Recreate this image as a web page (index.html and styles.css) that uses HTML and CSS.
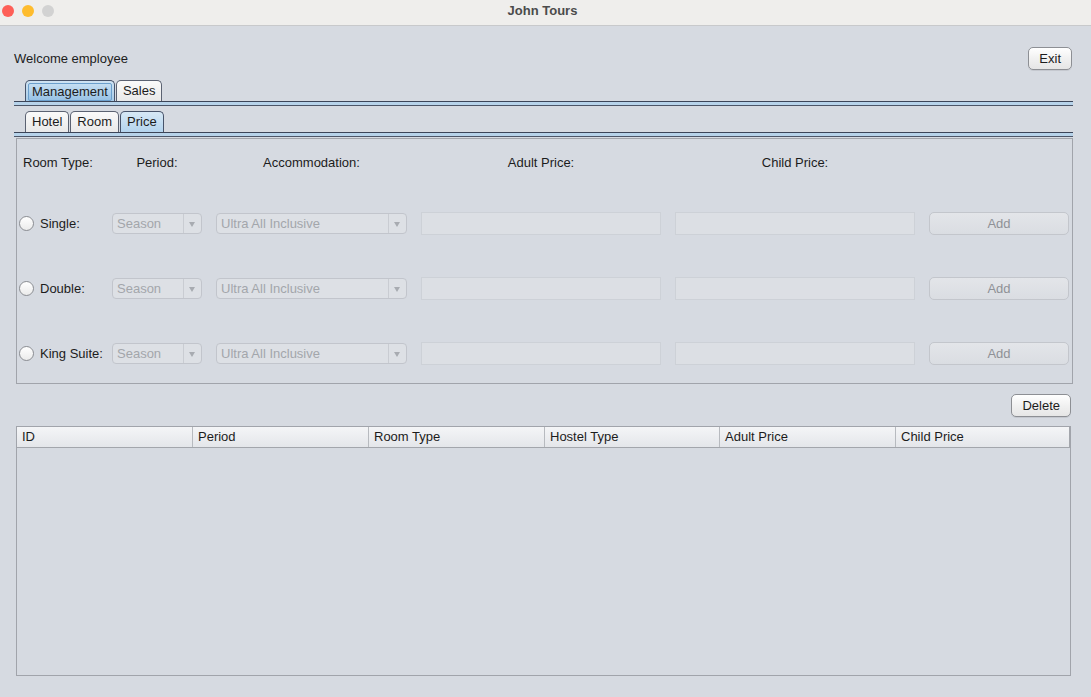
FILE: index.html
```html
<!DOCTYPE html>
<html>
<head>
<meta charset="utf-8">
<title>John Tours</title>
<link rel="stylesheet" href="styles.css">
</head>
<body>
<div class="titlebar">
  <div class="lights">
    <span class="light red"></span>
    <span class="light yellow"></span>
    <span class="light gray"></span>
  </div>
  <div class="title">John Tours</div>
</div>
<div class="window">
  <div class="top-row">
    <span class="welcome">Welcome employee</span>
    <button class="btn">Exit</button>
  </div>
  <div class="tabs main-tabs">
    <div class="tab selected"><span>Management</span></div>
    <div class="tab"><span>Sales</span></div>
  </div>
  <div class="tabline"></div>
  <div class="tabs sub-tabs">
    <div class="tab"><span>Hotel</span></div>
    <div class="tab"><span>Room</span></div>
    <div class="tab selected-soft"><span>Price</span></div>
  </div>
  <div class="tabline"></div>

  <div class="panel">
    <div class="hdr first">Room Type:</div>
    <div class="hdr">Period:</div>
    <div class="hdr">Accommodation:</div>
    <div class="hdr">Adult Price:</div>
    <div class="hdr">Child Price:</div>
    <div class="hdr"></div>

    <label class="radio-label"><span class="radio"></span>Single:</label>
    <div class="combo"><span class="val">Season</span><span class="arrow"></span></div>
    <div class="combo"><span class="val">Ultra All Inclusive</span><span class="arrow"></span></div>
    <div class="field"></div>
    <div class="field"></div>
    <button class="btn add">Add</button>

    <label class="radio-label"><span class="radio"></span>Double:</label>
    <div class="combo"><span class="val">Season</span><span class="arrow"></span></div>
    <div class="combo"><span class="val">Ultra All Inclusive</span><span class="arrow"></span></div>
    <div class="field"></div>
    <div class="field"></div>
    <button class="btn add">Add</button>

    <label class="radio-label"><span class="radio"></span>King Suite:</label>
    <div class="combo"><span class="val">Season</span><span class="arrow"></span></div>
    <div class="combo"><span class="val">Ultra All Inclusive</span><span class="arrow"></span></div>
    <div class="field"></div>
    <div class="field"></div>
    <button class="btn add">Add</button>
  </div>

  <div class="delete-row">
    <button class="btn">Delete</button>
  </div>

  <div class="table">
    <div class="thead">
      <div class="th">ID</div>
      <div class="th">Period</div>
      <div class="th">Room Type</div>
      <div class="th">Hostel Type</div>
      <div class="th">Adult Price</div>
      <div class="th">Child Price</div>
    </div>
    <div class="tbody"></div>
  </div>
</div>
</body>
</html>
```

FILE: styles.css
```css
* { box-sizing: border-box; }
html, body {
  margin: 0;
  padding: 0;
}
body {
  width: 1091px;
  height: 697px;
  overflow: hidden;
  background: #d6dae1;
  font-family: "Liberation Sans", Arial, sans-serif;
  font-size: 13px;
  color: #1c1c1c;
  display: flex;
  flex-direction: column;
}

/* Title bar */
.titlebar {
  height: 26px;
  flex: none;
  background: #efeeec;
  border-bottom: 1px solid #c8c9cb;
  display: flex;
  align-items: center;
  position: relative;
}
.lights {
  display: flex;
  gap: 8px;
  padding-left: 2px;
  margin-top: -3px;
}
.light {
  width: 12px;
  height: 12px;
  border-radius: 50%;
  display: block;
}
.light.red { background: #fe5f57; }
.light.yellow { background: #febc2e; }
.light.gray { background: #d2d2d2; }
.title {
  position: absolute;
  left: 0;
  right: 0;
  top: 3px;
  text-align: center;
  font-weight: bold;
  font-size: 13px;
  color: #4b4b4b;
  line-height: 16px;
  padding-right: 6px;
}

/* Window */
.window {
  flex: 1;
  display: flex;
  flex-direction: column;
  padding: 21px 19px 21px 14px;
}
.top-row {
  display: flex;
  justify-content: space-between;
  align-items: center;
  height: 23px;
}
.welcome {
  line-height: 16px;
}

.btn {
  font-family: "Liberation Sans", Arial, sans-serif;
  font-size: 13px;
  color: #1c1c1c;
  height: 23px;
  padding: 0 10px;
  border: 1px solid #8d8f94;
  border-radius: 5px;
  background: linear-gradient(#ffffff, #f1f1f1 50%, #e6e6e6);
  box-shadow: 0 1px 0 rgba(0,0,0,0.08);
  line-height: 20px;
}

/* Tabs */
.tabs {
  display: flex;
  margin-left: 11px;
  align-items: flex-end;
}
.main-tabs { margin-top: 10px; height: 21px; }
.sub-tabs { margin-top: 5px; height: 21px; }
.tab {
  height: 21px;
  border: 1px solid #5b6272;
  border-bottom: none;
  border-radius: 5px 5px 0 0;
  background: linear-gradient(#fafafa, #e9e9e9);
  padding: 0 6px;
  display: flex;
  align-items: center;
  margin-right: 1px;
  line-height: 16px;
}
.main-tabs .tab { margin-right: 0; }
.tab.selected {
  background: linear-gradient(#cfe3f3, #a9cce8);
  border-color: #47536a;
  padding: 2px 2px 0 2px;
  align-items: stretch;
  margin-right: 1px;
}
.tab.selected span {
  display: flex;
  align-items: center;
  padding: 0 3px;
  border: 1px solid #6b9fcc;
  border-radius: 2px;
  background: linear-gradient(#c5def2, #98c2e5);
}
.tab.selected-soft {
  background: linear-gradient(#d7e8f5, #b4d4ee);
  border-color: #47536a;
}
.tabline {
  height: 5px;
  margin-right: -1px;
  border-top: 1px solid #3c4558;
  border-bottom: 1px solid #4d5668;
  background: #b7d3ea;
}

/* Panel */
.panel {
  margin: 1px -1px 0 2px;
  border: 1px solid #a1a4ab;
  padding: 16px 0 18px 0;
  display: grid;
  grid-template-columns: 81px 90px 191px 240px 240px 140px;
  grid-template-rows: 15px 23px 23px 23px;
  column-gap: 14px;
  row-gap: 42px;
  align-items: center;
}
.hdr {
  text-align: center;
  line-height: 15px;
  white-space: nowrap;
}
.hdr.first {
  text-align: left;
  padding-left: 6px;
}
.panel > .hdr:nth-child(6) { visibility: hidden; }

.radio-label {
  display: flex;
  align-items: center;
  white-space: nowrap;
  padding-left: 2px;
}
.radio {
  width: 15px;
  height: 15px;
  border-radius: 50%;
  border: 1px solid #8b8d92;
  background: linear-gradient(#ffffff, #ebebeb);
  margin-right: 6px;
  flex: none;
}

.combo {
  height: 21px;
  border: 1px solid #c2c5cc;
  border-radius: 4px;
  background: #dde0e5;
  display: flex;
  align-items: stretch;
  color: #a3a6ab;
}
.combo .val {
  flex: 1;
  padding-left: 4px;
  line-height: 19px;
}
.combo .arrow {
  width: 18px;
  border-left: 1px solid #c9ccd2;
  position: relative;
}
.combo .arrow::after {
  content: "";
  position: absolute;
  left: 5px;
  top: 8px;
  border-left: 3.5px solid transparent;
  border-right: 3.5px solid transparent;
  border-top: 5px solid #a8abb1;
}

.field {
  height: 23px;
  border: 1px solid #cdd1d7;
  background: #dcdfe4;
}

.btn.add {
  width: 140px;
  color: #8f9196;
  border-color: #c3c6cc;
  background: linear-gradient(#e3e5e9, #dadde2);
  box-shadow: none;
}

/* Delete row */
.delete-row {
  display: flex;
  justify-content: flex-end;
  margin-top: 10px;
  margin-right: 1px;
}

/* Table */
.table {
  flex: 1;
  margin: 9px 1px 0 2px;
  border: 1px solid #a1a4ab;
  display: flex;
  flex-direction: column;
}
.thead {
  display: grid;
  grid-template-columns: 176px 176px 176px 175px 176px 1fr;
  height: 21px;
  background: linear-gradient(#f4f5f7, #e4e6ea);
  border-bottom: 1px solid #a3a6ac;
}
.th {
  padding-left: 5px;
  line-height: 20px;
  border-right: 1px solid #b7babf;
}
.th:last-child { border-right: 1px solid #a3a6ac; }
.tbody {
  flex: 1;
}
```
